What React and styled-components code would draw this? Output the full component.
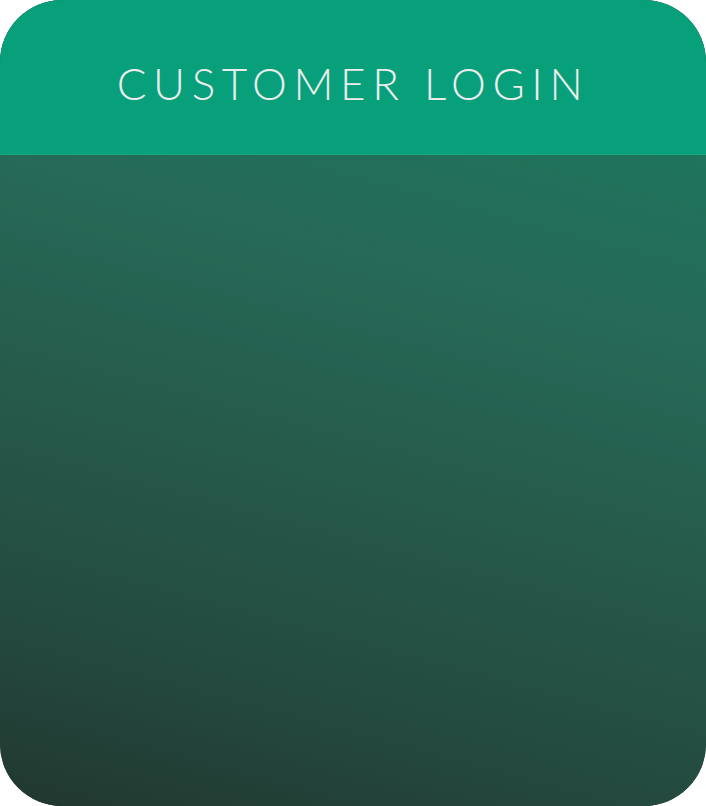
import React from 'react';
import styled, { createGlobalStyle } from 'styled-components';

const GlobalStyle = createGlobalStyle`
  html, body {
    margin: 0;
    padding: 0;
    background: #ffffff;
  }
`

const Card = styled.div`
    width: 706px;
    height: 806px;
    border-radius: 62px;
    overflow: hidden;
    display: flex;
    flex-direction: column;
    background: #213830;
`

const Header = styled.div`
    height: 155px;
    flex-shrink: 0;
    display: flex;
    align-items: center;
    justify-content: center;
    background: #07a07b;
    border-bottom: 1px solid #17a882;
    box-sizing: border-box;

    h1 {
        margin: 0;
        padding: 0;
        font-family: 'Lato', 'Liberation Sans', sans-serif;
        font-weight: 300;
        font-size: 44px;
        letter-spacing: 6.6px;
        color: #ececec;
        transform: translateY(6px);
    }
`

const Body = styled.div`
    flex: 1;
    background: linear-gradient(15deg, #21372f 0%, #244a40 22.5%, #265a4b 50%, #266a57 77.5%, #1f745b 100%);
`

const App = () => {
    return (
        <>
          <GlobalStyle />
          <Card>
            <Header>
              <h1>CUSTOMER LOGIN</h1>
            </Header>
            <Body />
          </Card>
        </>
    )
}

export default App;
